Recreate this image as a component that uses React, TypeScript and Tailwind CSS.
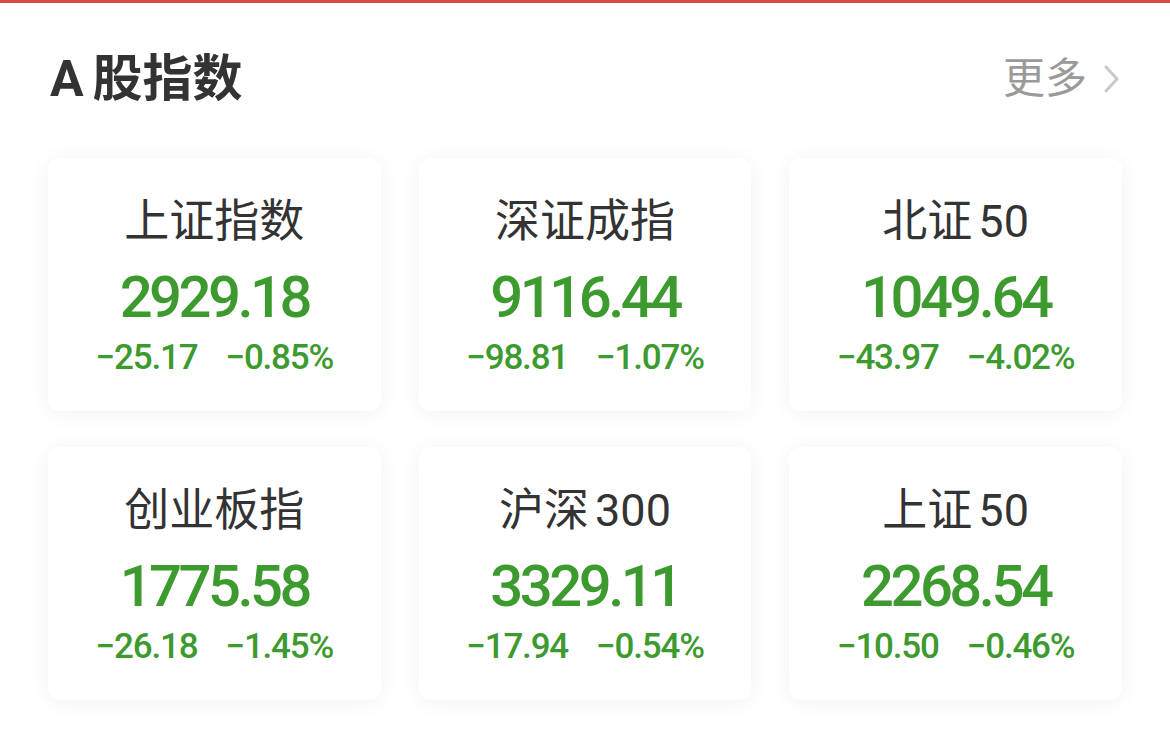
import React from 'react';

interface IndexItem {
  name: React.ReactNode;
  price: string;
  change: string;
  percent: string;
}

const indices: IndexItem[] = [
  { name: '上证指数', price: '2929.18', change: '-25.17', percent: '-0.85%' },
  { name: '深证成指', price: '9116.44', change: '-98.81', percent: '-1.07%' },
  { name: <>北证<span className="ml-[6px]">50</span></>, price: '1049.64', change: '-43.97', percent: '-4.02%' },
  { name: '创业板指', price: '1775.58', change: '-26.18', percent: '-1.45%' },
  { name: <>沪深<span className="ml-[6px]">300</span></>, price: '3329.11', change: '-17.94', percent: '-0.54%' },
  { name: <>上证<span className="ml-[6px]">50</span></>, price: '2268.54', change: '-10.50', percent: '-0.46%' },
];

const sans = "font-['Roboto','Noto_Sans_CJK_SC',sans-serif]";

// show a real minus sign instead of the hyphen
const fmt = (s: string) => s.replace('-', '\u2212');

const IndexCard: React.FC<{ item: IndexItem }> = ({ item }) => (
  <div className="flex h-[253px] flex-col items-center rounded-[12px] bg-white pt-[40px] shadow-[0_2px_22px_rgba(0,0,0,0.06)]">
    <div className={`${sans} text-[45px] leading-[48px] text-[#333333]`}>{item.name}</div>
    <div className={`${sans} mt-[22px] text-[58px] font-medium leading-[58px] tracking-[-3.5px] text-[#3d9a2e]`}>
      {item.price}
    </div>
    <div className={`${sans} mt-[12px] flex gap-[28px] text-[35px] font-medium leading-[40px] tracking-[-1.2px] text-[#3d9a2e]`}>
      <span>{fmt(item.change)}</span>
      <span>{fmt(item.percent)}</span>
    </div>
  </div>
);

export default function App() {
  return (
    <div className="h-[739px] w-[1170px] overflow-hidden border-t-[3px] border-[#dd4844] bg-white">
      <div className="flex items-center justify-between pl-[50px] pr-[50px] pt-[47px]">
        <h1 className={`${sans} flex items-center text-[50px] font-bold leading-[58px] text-[#333333]`}>
          <span>A</span>
          <span className="ml-[9px]">股指数</span>
        </h1>
        <button className="flex items-center gap-[16px]">
          <span className={`${sans} text-[42px] leading-[48px] text-[#9a9a9a]`}>更多</span>
          <svg width="17" height="28" viewBox="0 0 17 28" fill="none">
            <polyline points="3,2 14,14 3,26" stroke="#c9c9c9" strokeWidth="3" strokeLinecap="round" strokeLinejoin="round" />
          </svg>
        </button>
      </div>
      <div className="mt-[50px] grid grid-cols-3 gap-x-[38px] gap-y-[36px] px-[48px]">
        {indices.map((item, i) => (
          <IndexCard key={i} item={item} />
        ))}
      </div>
    </div>
  );
}
